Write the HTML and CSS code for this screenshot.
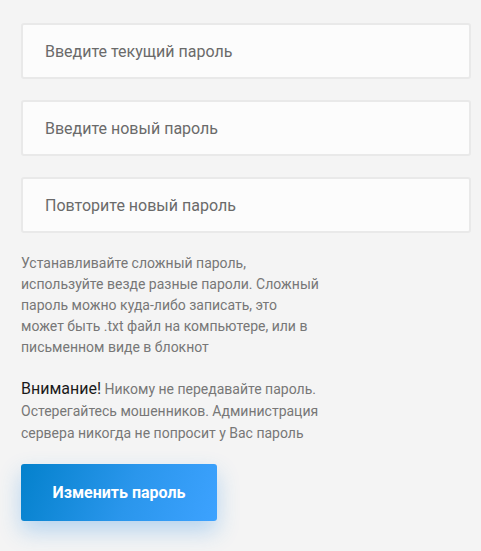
FILE: index.html
```html
<!DOCTYPE html>
<html lang="ru">
<head>
<meta charset="utf-8">
<link rel="stylesheet" href="styles.css">
</head>
<body>
<form class="form">
  <div class="fields">
    <input class="field" type="password" placeholder="Введите текущий пароль">
    <input class="field" type="password" placeholder="Введите новый пароль">
    <input class="field" type="password" placeholder="Повторите новый пароль">
  </div>
  <p class="hint">Устанавливайте сложный пароль, используйте везде разные пароли. Сложный пароль можно куда-либо записать, это может быть .txt файл на компьютере, или в письменном виде в блокнот</p>
  <p class="hint warn"><span class="warn-title">Внимание!</span> Никому не передавайте пароль. Остерегайтесь мошенников. Администрация сервера никогда не попросит у Вас пароль</p>
  <button class="btn" type="button">Изменить пароль</button>
</form>
</body>
</html>
```
FILE: styles.css
```css
html, body {
  margin: 0;
  padding: 0;
  background: #f4f4f4;
  font-family: Roboto, "Noto Sans", sans-serif;
  min-height: 100%;
}
.form {
  padding: 23px 0 40px 21px;
  width: 450px;
}
.fields {
  display: flex;
  flex-direction: column;
  gap: 21px;
}
.field {
  box-sizing: border-box;
  width: 450px;
  height: 56px;
  border: 2px solid #e9e9e9;
  border-radius: 3px;
  background: #fcfcfc;
  padding: 0 22px;
  font-family: Roboto, sans-serif;
  font-size: 16px;
  color: #555;
  outline: none;
}
.field::placeholder {
  color: #6a6a6a;
}
.hint {
  width: 299px;
  margin: 20px 0 0;
  font-size: 14px;
  line-height: 21px;
  color: #777;
}
.warn {
  margin-top: 20px;
  line-height: 22px;
}
.warn-title {
  color: #1a1a1a;
  font-size: 16px;
  font-weight: 400;
  line-height: 20px;
}
.btn {
  display: block;
  margin-top: 20px;
  width: 196px;
  height: 57px;
  border: none;
  border-radius: 3px;
  background: linear-gradient(110deg, #0481cc 0%, #2a96ec 55%, #3da2ff 100%);
  color: #fff;
  font-family: Roboto, sans-serif;
  font-weight: 700;
  font-size: 16px;
  box-shadow: 0 10px 22px rgba(40, 140, 230, 0.3);
  cursor: pointer;
}
```
